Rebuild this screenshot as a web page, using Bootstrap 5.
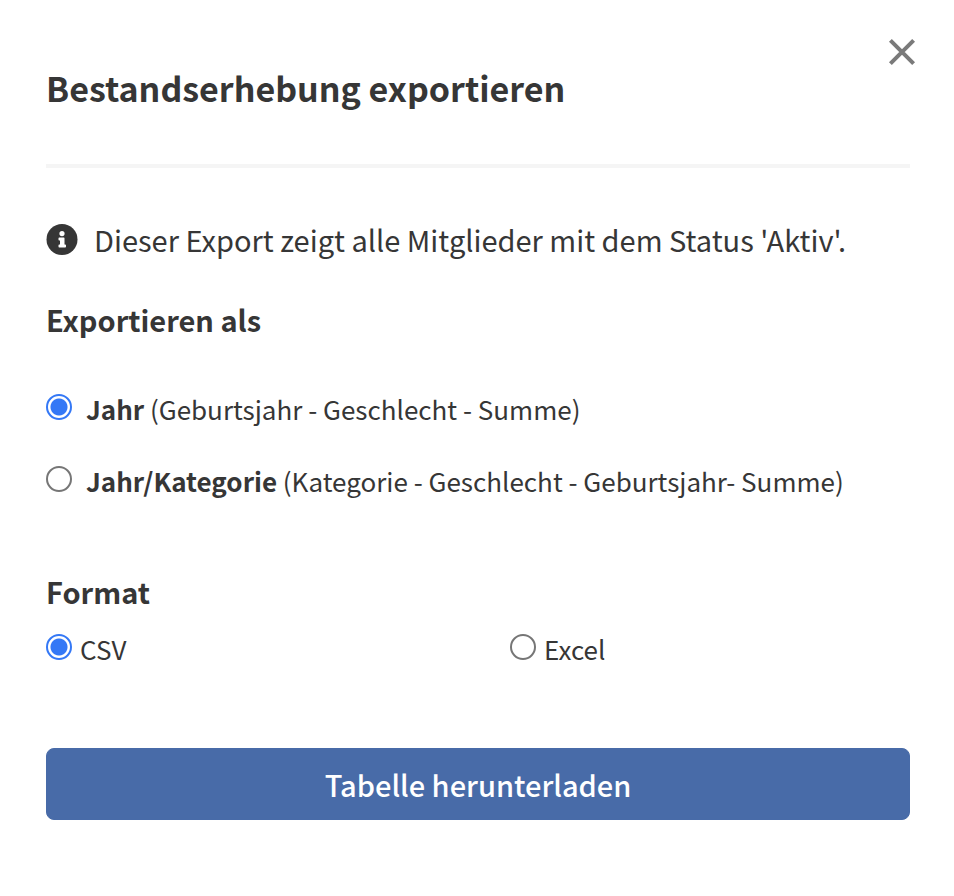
<!DOCTYPE html>
<html lang="de">
<head>
<meta charset="utf-8">
<meta name="viewport" content="width=device-width, initial-scale=1">
<title>Bestandserhebung exportieren</title>
<link href="https://cdn.jsdelivr.net/npm/bootstrap@5.3.0/dist/css/bootstrap.min.css" rel="stylesheet">
<style>
body{font-family:"Noto Sans CJK SC","Source Sans Pro",sans-serif;color:#363636;font-size:26px;line-height:36px}
.export-dialog{padding:36px 44px 76px 46px}
.dialog-head{margin-right:-8px}
.close-btn{width:32px;height:32px;color:#7a7a7a}
.close-btn svg,.info svg{width:32px;height:32px}
.dialog-title{font-size:34px;line-height:44px;padding-top:30px}
.rule{height:4px;background:#f5f5f5;margin:54px 0 51px}
.info{font-size:29px;line-height:40px;gap:16px;margin-bottom:40px}
.sub{font-size:29px;line-height:40px}
.layouts{gap:36px;margin:52px 0 72px}
.layouts .choice{gap:14px}
.formats{gap:64px;margin:20px 0 81px}
.formats .choice{gap:8px}
.dot{appearance:none;width:26px;height:26px;margin:3px 0 0;border:2px solid #767676;border-radius:50%;background:#fff}
.dot:checked{border-color:#3478f6;background:radial-gradient(circle closest-side,#3478f6 8px,#fff 9px)}
.download{--bs-btn-bg:#486ba8;--bs-btn-border-color:#486ba8;--bs-btn-hover-bg:#3f5f97;--bs-btn-hover-border-color:#3f5f97;--bs-btn-border-radius:8px;--bs-btn-font-size:29px;--bs-btn-font-weight:500;--bs-btn-line-height:40px;--bs-btn-padding-y:15px}
</style>
</head>
<body>
<main class="export-dialog">
  <header class="dialog-head d-flex justify-content-between align-items-start">
    <h1 class="dialog-title fw-bold mb-0">Bestandserhebung exportieren</h1>
    <button type="button" class="close-btn btn p-0 border-0 d-flex flex-shrink-0" aria-label="Schließen">
      <svg viewBox="0 0 32 32" fill="none" stroke="currentColor" stroke-width="4" aria-hidden="true"><path d="M4.4 4.4 27.6 27.6M27.6 4.4 4.4 27.6"/></svg>
    </button>
  </header>
  <div class="rule"></div>
  <p class="info d-flex align-items-center">
    <svg class="flex-shrink-0" viewBox="0 0 32 32" aria-hidden="true"><circle cx="16" cy="16.5" r="15.5" fill="#363636"/><path fill="#fff" d="M16 8a2.6 2.6 0 1 1 0 5.2 2.6 2.6 0 0 1 0-5.2zM13.2 14.5h4.6q.7 0 .7.7v6.3h.7q.8 0 .8.7v1.6q0 .7-.8.7h-6q-.7 0-.7-.7v-1.6q0-.7.7-.7h.8v-4h-.8q-.7 0-.7-.7v-1.6q0-.7.7-.7z"/></svg>
    <span>Dieser Export zeigt alle Mitglieder mit dem Status 'Aktiv'.</span>
  </p>
  <form>
    <h2 class="sub fw-bold mb-0" id="layout-title">Exportieren als</h2>
    <div class="layouts d-flex flex-column" role="radiogroup" aria-labelledby="layout-title">
      <div class="choice d-flex align-items-start">
        <input class="dot flex-shrink-0" type="radio" name="layout" id="layout-year" checked>
        <label for="layout-year"><b>Jahr</b> (Geburtsjahr - Geschlecht - Summe)</label>
      </div>
      <div class="choice d-flex align-items-start">
        <input class="dot flex-shrink-0" type="radio" name="layout" id="layout-category">
        <label for="layout-category"><b>Jahr/Kategorie</b> (Kategorie - Geschlecht - Geburtsjahr- Summe)</label>
      </div>
    </div>
    <h2 class="sub fw-bold mb-0" id="format-title">Format</h2>
    <div class="formats d-flex" role="radiogroup" aria-labelledby="format-title">
      <div class="choice d-flex align-items-start w-50">
        <input class="dot flex-shrink-0" type="radio" name="format" id="format-csv" checked>
        <label for="format-csv">CSV</label>
      </div>
      <div class="choice d-flex align-items-start w-50">
        <input class="dot flex-shrink-0" type="radio" name="format" id="format-excel">
        <label for="format-excel">Excel</label>
      </div>
    </div>
    <button type="button" class="btn btn-primary download w-100">Tabelle herunterladen</button>
  </form>
</main>
<script src="https://cdn.jsdelivr.net/npm/bootstrap@5.3.0/dist/js/bootstrap.bundle.min.js"></script>
</body>
</html>
